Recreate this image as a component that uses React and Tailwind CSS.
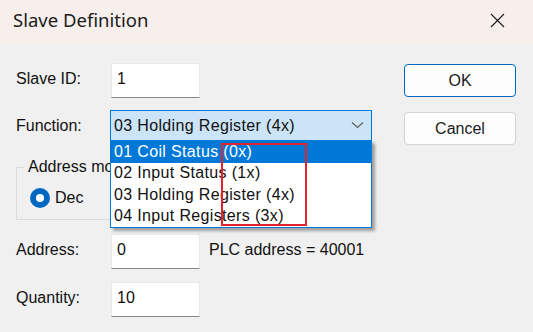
import React from 'react';

const FUNCTIONS = [
  '01 Coil Status (0x)',
  '02 Input Status (1x)',
  '03 Holding Register (4x)',
  '04 Input Registers (3x)',
];

function TextBox({ value }) {
  return (
    <div className="w-[89px] h-[35px] bg-white border border-[#e8e8e8] border-b-[#878787] pl-[5px] pt-[5px] leading-[20px]">
      {value}
    </div>
  );
}

function Button({ children, primary }) {
  const ring = primary ? 'border-[#0067c0] border-[1.5px]' : 'border-[#d3d3d3] border';
  return (
    <button className={`w-[112px] h-[33px] rounded-[4px] bg-[#fdfdfd] text-[16px] text-[#1b1b1b] ${ring}`}>
      {children}
    </button>
  );
}

export default function App() {
  return (
    <div className="w-[533px] h-[332px] overflow-hidden bg-[#f0f0f0] text-[16px] text-[#111] font-['Liberation_Sans',Arial,sans-serif]">
      {/* title bar */}
      <div className="h-[43px] bg-[#f6efeb] flex items-center justify-between pl-[13px] pr-[28px]">
        <span className="text-[18.5px] text-[#1b1b1b] font-['Noto_Sans',sans-serif] leading-none -mt-[2px]">Slave Definition</span>
        <svg width="15" height="15" viewBox="0 0 15 15" className="-mt-[2px]">
          <path d="M1 1L14 14M14 1L1 14" stroke="#222" strokeWidth="1.2" fill="none" />
        </svg>
      </div>

      <div className="flex pt-[20px] pl-[16px]">
        {/* form column */}
        <div className="flex flex-col w-[372px]">
          <div className="flex items-center h-[35px]">
            <span className="w-[95px] -mt-[3px]">Slave ID:</span>
            <TextBox value="1" />
          </div>

          <div className="flex items-center h-[31px] mt-[12px]">
            <span className="w-[94px]">Function:</span>
            <div className="relative">
              <div className="w-[262px] h-[31px] bg-[#cce4f7] border border-[#0078d7] flex items-center justify-between pl-[3px] pr-[7px]">
                <span className="tracking-[0.35px]">03 Holding Register (4x)</span>
                <svg width="13" height="8" viewBox="0 0 13 8" className="-mt-[2px]">
                  <path d="M1 1.5L6.5 6.5L12 1.5" stroke="#5f5f5f" strokeWidth="1.2" fill="none" />
                </svg>
              </div>

              {/* open list */}
              <div className="absolute left-0 top-[30px] z-10 w-[262px] bg-white border border-[#0078d7] shadow-[3px_3px_3px_rgba(0,0,0,0.35)]">
                {FUNCTIONS.map((f, i) => (
                  <div
                    key={f}
                    className={`h-[21.5px] flex items-center pl-[3px] tracking-[0.35px] ${i === 0 ? 'bg-[#0078d7] text-white' : 'text-[#111]'}`}
                  >
                    {f}
                  </div>
                ))}
                <div className="absolute left-[110px] top-[2px] w-[86px] h-[83px] border-2 border-[#e2222c]" />
              </div>
            </div>
          </div>

          <fieldset className="mt-[17px] w-[344px] h-[62px] border border-[#dcdcdc]">
            <legend className="ml-[7px] px-[4px] leading-[18px]">Address mode</legend>
            <div className="flex items-center gap-[5px] mt-[10px] ml-[13px]">
              <span className="w-[20px] h-[20px] rounded-full bg-[#0067c0] flex items-center justify-center">
                <span className="w-[8px] h-[8px] rounded-full bg-white" />
              </span>
              <span>Dec</span>
            </div>
          </fieldset>

          <div className="flex items-center h-[35px] mt-[14px]">
            <span className="w-[95px] -mt-[3px]">Address:</span>
            <TextBox value="0" />
            <span className="ml-[9px] -mt-[3px]">PLC address = 40001</span>
          </div>

          <div className="flex items-center h-[35px] mt-[13px]">
            <span className="w-[95px] -mt-[3px]">Quantity:</span>
            <TextBox value="10" />
          </div>
        </div>

        {/* buttons */}
        <div className="flex flex-col gap-[15px] ml-[16px] pt-[1px]">
          <Button primary>OK</Button>
          <Button>Cancel</Button>
        </div>
      </div>
    </div>
  );
}
